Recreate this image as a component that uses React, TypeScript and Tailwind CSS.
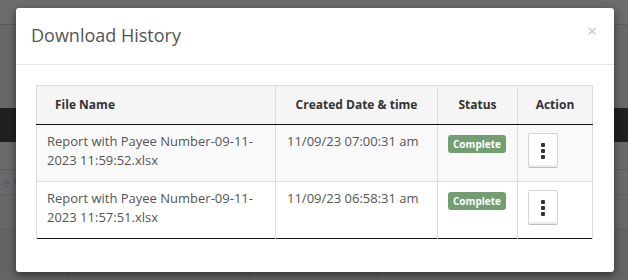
import React from 'react';

type Download = {
   fileName: string;
   createdAt: string;
   status: string;
};

const downloads: Download[] = [
   {
      fileName: 'Report with Payee Number-09-11-2023 11:59:52.xlsx',
      createdAt: '11/09/23 07:00:31 am',
      status: 'Complete',
   },
   {
      fileName: 'Report with Payee Number-09-11-2023 11:57:51.xlsx',
      createdAt: '11/09/23 06:58:31 am',
      status: 'Complete',
   },
];

const ActionButton = () => (
   <button className="w-[30px] h-[35px] flex flex-col items-center justify-center gap-[2px] bg-white border border-[#d4d4d4] border-b-[#bdbdbd] rounded-[2px] shadow-[inset_0_-2px_0_#ececec]">
      <span className="w-[4px] h-[4px] bg-[#333] rounded-[1px]" />
      <span className="w-[4px] h-[4px] bg-[#333] rounded-[1px]" />
      <span className="w-[4px] h-[4px] bg-[#333] rounded-[1px]" />
   </button>
);

const App = () => {
   return (
      <div
         className="relative w-[628px] h-[280px] overflow-hidden bg-[#676767]"
         style={{ fontFamily: '"Open Sans", "Liberation Sans", sans-serif' }}
      >
         {/* page behind the overlay */}
         <div className="flex flex-col">
            <div className="h-[25px] bg-[#6c6c6c] border-b border-[#5b5b5b]" />
            <div className="h-[83px] bg-[#686868]" />
            <div className="h-[34px] bg-[#1f2022]" />
            <div className="h-[28px] bg-[#6a6a6a] border-b border-[#5e5e5e]" />
            <div className="h-[25px] bg-[#6a6a6a] border-b border-[#5e5e5e] text-[13px] text-[#4d5c6b] leading-[25px] pl-[2px]">
               e Rate
            </div>
            <div className="h-[34px] bg-[#686868] border-b border-[#5e5e5e]" />
            <div className="flex h-[60px] bg-[#646464]">
               <div className="w-[68px] border-r border-[#5a5a5a]" />
               <div className="w-[182px] border-r border-[#5a5a5a]" />
               <div className="w-[128px] border-r border-[#5a5a5a]" />
               <div className="flex-1" />
            </div>
         </div>

         {/* modal */}
         <div className="absolute left-[16px] top-[8px] w-[598px] h-[264px] bg-white rounded-[3px] shadow-[0_3px_9px_rgba(0,0,0,0.5)]">
            <div className="relative h-[57px] border-b border-[#e5e5e5] px-[15px] pt-[14px]">
               <div className="text-[18px] leading-[27px] text-[#555]">
                  Download History
               </div>
               <span className="absolute right-[17px] top-[13px] text-[17px] leading-[20px] text-[#c4c4c4]">
                  ×
               </span>
            </div>
            <div className="px-[20px] pt-[20px]">
               <table className="w-[557px] border-collapse text-[13px] text-[#555]">
                  <thead>
                     <tr className="bg-[#f5f5f5] h-[39px] border-t border-[#dddddd]">
                        <th className="w-[239px] text-left font-bold text-[12px] text-[#333] pl-[18px] border-l border-[#dddddd] border-b border-b-[#111]">
                           File Name
                        </th>
                        <th className="w-[162px] text-center font-bold text-[12px] text-[#333] border-l border-[#dddddd] border-b border-b-[#111]">
                           Created Date &amp; time
                        </th>
                        <th className="w-[80px] text-center font-bold text-[12px] text-[#333] border-l border-[#dddddd] border-b border-b-[#111]">
                           Status
                        </th>
                        <th className="text-center font-bold text-[12px] text-[#333] border-l border-r border-[#dddddd] border-b border-b-[#111]">
                           Action
                        </th>
                     </tr>
                  </thead>
                  <tbody>
                     {downloads.map((item, index) => (
                        <tr
                           key={index}
                           className={`h-[57px] ${
                              index % 2 === 0 ? 'bg-[#f9f9f9]' : 'bg-white'
                           } ${
                              index === downloads.length - 1
                                 ? 'border-b border-[#111]'
                                 : 'border-b border-[#dddddd]'
                           }`}
                        >
                           <td className="align-top pl-[10px] pr-[8px] pt-[7px] leading-[19px] border-l border-[#dddddd]">
                              {item.fileName}
                           </td>
                           <td className="align-top pl-[11px] pt-[7px] leading-[19px] border-l border-[#dddddd]">
                              {item.createdAt}
                           </td>
                           <td className="align-top pl-[10px] pt-[9px] border-l border-[#dddddd]">
                              <span className="inline-block bg-[#729e72] text-white text-[10px] font-bold leading-[18px] px-[5px] rounded-[3px]">
                                 {item.status}
                              </span>
                           </td>
                           <td className="align-top pl-[10px] pt-[8px] border-l border-r border-[#dddddd]">
                              <ActionButton />
                           </td>
                        </tr>
                     ))}
                  </tbody>
               </table>
            </div>
         </div>
      </div>
   );
};

export default App;
